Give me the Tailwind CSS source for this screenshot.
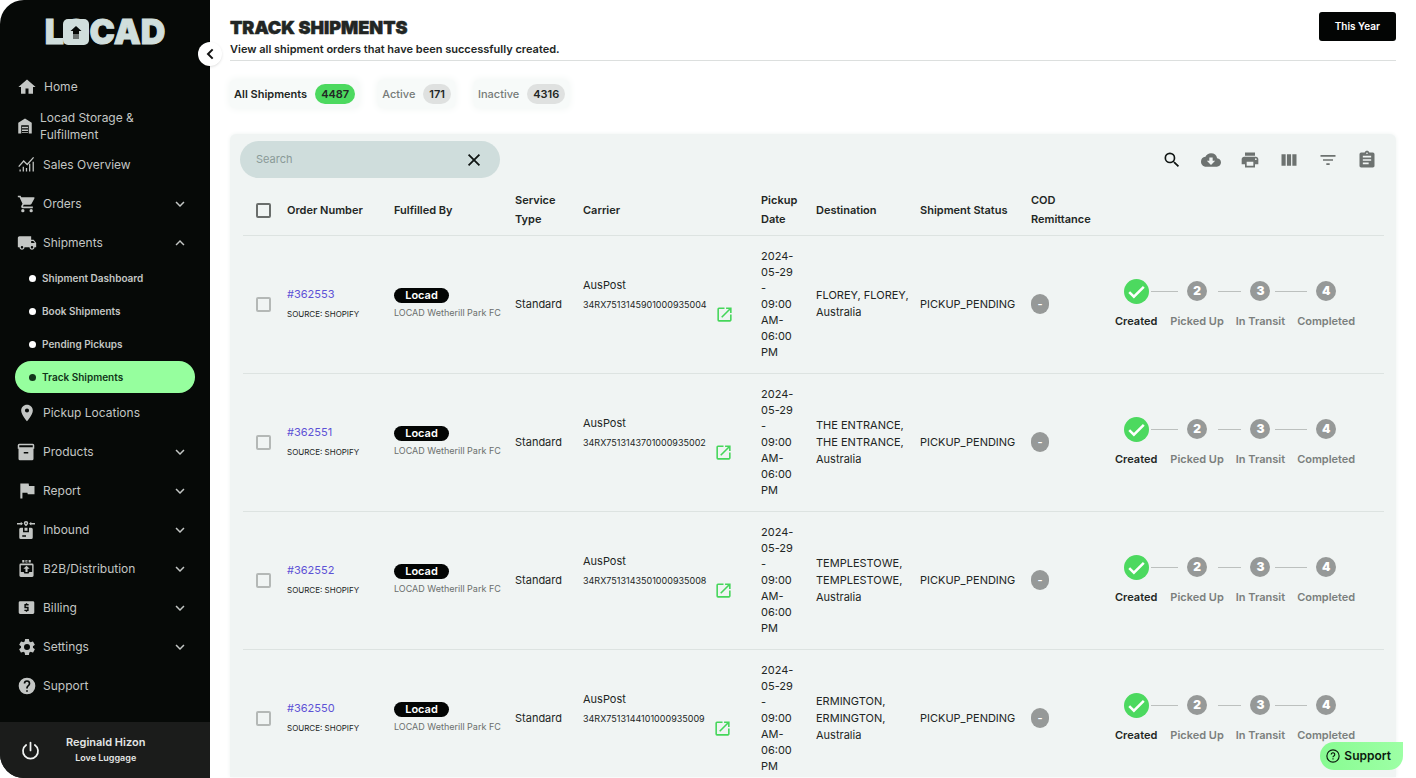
<!DOCTYPE html>
<html lang="en">
<head>
<meta charset="utf-8">
<meta name="viewport" content="width=device-width, initial-scale=1">
<title>Locad - Track Shipments</title>
<script src="https://cdn.jsdelivr.net/npm/@tailwindcss/browser@4"></script>
</head>
<body class="bg-white font-['Inter','Liberation_Sans',sans-serif] text-[#222624]">

<svg class="hidden" aria-hidden="true">
  <symbol id="down" viewBox="0 0 24 24"><path d="M7.41 8.59 12 13.17l4.59-4.58L18 10l-6 6-6-6z"/></symbol>
  <symbol id="up" viewBox="0 0 24 24"><path d="M7.41 15.41 12 10.83l4.59 4.58L18 14l-6-6-6 6z"/></symbol>
  <symbol id="open" viewBox="0 0 24 24"><path d="M19 19H5V5h7V3H5a2 2 0 0 0-2 2v14a2 2 0 0 0 2 2h14c1.100 0 2-.9 2-2v-7h-2zM14 3v2h3.590l-9.830 9.830 1.410 1.410L19 6.410V10h2V3z"/></symbol>
</svg>

<div class="flex h-screen overflow-hidden">

  <!-- Sidebar -->
  <aside class="relative z-10 flex w-[210px] shrink-0 flex-col rounded-l-3xl bg-[#060907] text-[#c3c6c4]">
    <a href="#" aria-label="Locad" class="mt-3 self-center text-[34px] leading-10 font-black text-[#d0dedc] [-webkit-text-stroke:1px_#d0dedc]">L<span class="relative">O<svg class="absolute inset-x-0 top-[8px] mx-auto h-[26px] w-[26px]" viewBox="0 0 26 26" aria-hidden="true"><rect width="26" height="26" rx="5" fill="#d0dedc"/><path d="M13 7l5.500 5H16v3.500h-6V12H7.500zM10 16.500h6v1h-6zM10 18.500h6v1h-6z" fill="#060907"/></svg></span>CAD</a>
    <button type="button" aria-label="Collapse sidebar" class="absolute top-[42px] -right-3 flex size-6 items-center justify-center rounded-full bg-white shadow-sm">
      <svg class="size-4" viewBox="0 0 24 24" fill="none" stroke="#111" stroke-width="3"><path d="m16 5-7 7 7 7"/></svg>
    </button>

    <nav class="mt-[15px] text-[12px]" aria-label="Main">
      <ul>
        <li><a href="#" class="flex h-[39px] items-center gap-2 pl-[18px]">
          <svg class="size-[18px]" viewBox="0 0 24 24" fill="currentColor"><path d="M10 21v-7h4v7h6v-9h3.500L12 2 .5 12H4v9z"/></svg>Home</a></li>
        <li><a href="#" class="flex h-[39px] items-center gap-1.5 pl-4 leading-[17px]">
          <svg class="size-[18px]" viewBox="0 0 24 24" fill="currentColor"><path fill-rule="evenodd" d="M12 2 3 7.500V22h4V11h10v11h4V7.500zM8 13h8v2H8zm0 3.500h8v2H8zM8 20h8v1H8z"/></svg><span>Locad Storage &amp;<br>Fulfillment</span></a></li>
        <li><a href="#" class="flex h-[39px] items-center gap-2 pl-[18px]">
          <svg class="size-[17px]" viewBox="0 0 24 24" fill="none" stroke="currentColor" stroke-width="1.800"><path d="m1 15 7-8 5 5 9-10M3 22v-3M7.500 22v-7M12 22v-5M16.500 22V11M21.500 22V8"/></svg>Sales Overview</a></li>
        <li><button type="button" class="flex h-[39px] w-full items-center gap-1.5 pr-[21px] pl-[17px]">
          <svg class="size-5" viewBox="0 0 24 24" fill="currentColor"><path d="M7 18a2 2 0 1 0 0 4 2 2 0 0 0 0-4M1 2v2h2l3.600 7.590-1.350 2.450C4.520 15.370 5.480 17 7 17h12v-2H7.420c-.14 0-.25-.11-.25-.25l.03-.12.9-1.630h7.450c.75 0 1.410-.41 1.750-1.030l3.580-6.490A1 1 0 0 0 20 4H5.210l-.94-2zm16 16a2 2 0 1 0 0 4 2 2 0 0 0 0-4"/></svg>Orders
          <svg class="ml-auto size-[18px]" fill="currentColor"><use href="#down"/></svg></button></li>
        <li><button type="button" aria-expanded="true" class="flex h-[39px] w-full items-center gap-1.5 pr-[21px] pl-[17px]">
          <svg class="size-5" viewBox="0 0 24 24" fill="currentColor"><path d="M20 8h-3V4H3c-1.100 0-2 .9-2 2v11h2c0 1.660 1.340 3 3 3s3-1.340 3-3h6c0 1.660 1.340 3 3 3s3-1.340 3-3h2v-5zM6 18.500a1.500 1.500 0 1 1 0-3 1.500 1.500 0 0 1 0 3m13.500-9 1.960 2.500H17V9.500zm-1.500 9a1.500 1.500 0 1 1 0-3 1.500 1.500 0 0 1 0 3"/></svg>Shipments
          <svg class="ml-auto size-[18px]" fill="currentColor"><use href="#up"/></svg></button>
          <ul class="mx-[15px] flex flex-col gap-px text-[10px] font-semibold">
            <li><a href="#" class="flex h-8 items-center gap-1.5 pl-[14px]"><i class="size-[7px] rounded-full bg-white"></i>Shipment Dashboard</a></li>
            <li><a href="#" class="flex h-8 items-center gap-1.5 pl-[14px]"><i class="size-[7px] rounded-full bg-white"></i>Book Shipments</a></li>
            <li><a href="#" class="flex h-8 items-center gap-1.5 pl-[14px]"><i class="size-[7px] rounded-full bg-white"></i>Pending Pickups</a></li>
            <li><a href="#" aria-current="page" class="flex h-8 items-center gap-1.5 rounded-full bg-[#96ff9e] pl-[14px] text-[#12351a]"><i class="size-[7px] rounded-full bg-[#12351a]"></i>Track Shipments</a></li>
          </ul></li>
        <li><a href="#" class="flex h-[39px] items-center gap-1.5 pl-[17px]">
          <svg class="size-5" viewBox="0 0 24 24" fill="currentColor"><path d="M12 2C8.130 2 5 5.130 5 9c0 5.250 7 13 7 13s7-7.750 7-13c0-3.870-3.130-7-7-7m0 9.500a2.500 2.500 0 0 1 0-5 2.500 2.500 0 0 1 0 5"/></svg>Pickup Locations</a></li>
        <li><button type="button" class="flex h-[39px] w-full items-center gap-2 pr-[21px] pl-[17px]">
          <svg class="size-[18px]" viewBox="0 0 24 24" fill="currentColor"><path fill-rule="evenodd" d="M3 1h18a2 2 0 0 1 2 2v4.500h-1V21a2 2 0 0 1-2 2H4a2 2 0 0 1-2-2V7.500H1V3a2 2 0 0 1 2-2m0 2v2.500h18V3zm6 9v2h6v-2z"/></svg>Products
          <svg class="ml-auto size-[18px]" fill="currentColor"><use href="#down"/></svg></button></li>
        <li><button type="button" class="flex h-[39px] w-full items-center gap-1.5 pr-[21px] pl-[17px]">
          <svg class="size-5" viewBox="0 0 24 24" fill="currentColor"><path d="M14.400 6 14 3H4v18h2.500v-7h6l.4 2H21V6z"/></svg>Report
          <svg class="ml-auto size-[18px]" fill="currentColor"><use href="#down"/></svg></button></li>
        <li><button type="button" class="flex h-[39px] w-full items-center gap-2 pr-[21px] pl-[17px]">
          <svg class="size-[18px]" viewBox="0 0 24 24" fill="currentColor"><path fill-rule="evenodd" d="M0 2.500h5V1l3 2.500L5 6V4.500H0zM24 2.500h-5V1l-3 2.500L19 6V4.500h5zM12 0a3 3 0 0 1 3 3c0 2-3 4-3 4S9 5 9 3a3 3 0 0 1 3-3m0 2a1 1 0 1 0 0 2 1 1 0 0 0 0-2M5 9h3v6h8V9h3a2 2 0 0 1 2 2v11a2 2 0 0 1-2 2H5a2 2 0 0 1-2-2V11a2 2 0 0 1 2-2M10 9h4v4h-4zM7 19v2h5v-2z"/></svg>Inbound
          <svg class="ml-auto size-[18px]" fill="currentColor"><use href="#down"/></svg></button></li>
        <li><button type="button" class="flex h-[39px] w-full items-center gap-2 pr-[21px] pl-[18px]">
          <svg class="size-[17px]" viewBox="0 0 24 24" fill="currentColor"><path fill-rule="evenodd" d="M6 0h3v3.500H6zM10.500 0h3v1h-2v1h2v1.500h-3zM15 0h3v3.500h-3zM4 5h16a2 2 0 0 1 2 2v15a2 2 0 0 1-2 2H4a2 2 0 0 1-2-2V7a2 2 0 0 1 2-2m0 2.500V17h4l1 2h6l1-2h4V7.500zM12 8l4.500 4.500h-3V17h-3v-4.500h-3z"/></svg>B2B/Distribution
          <svg class="ml-auto size-[18px]" fill="currentColor"><use href="#down"/></svg></button></li>
        <li><button type="button" class="flex h-[39px] w-full items-center gap-2 pr-[21px] pl-[18px]">
          <svg class="size-[17px]" viewBox="0 0 24 24" fill="currentColor"><path fill-rule="evenodd" d="M3 3h18a2 2 0 0 1 2 2v14a2 2 0 0 1-2 2H3a2 2 0 0 1-2-2V5a2 2 0 0 1 2-2m8 3v1H9v6h4v2H9v2h2v1h2v-1h2v-6h-4V9h4V7h-2V6z"/></svg>Billing
          <svg class="ml-auto size-[18px]" fill="currentColor"><use href="#down"/></svg></button></li>
        <li><button type="button" class="flex h-[39px] w-full items-center gap-1.5 pr-[21px] pl-[17px]">
          <svg class="size-5" viewBox="0 0 24 24" fill="currentColor"><path d="M19.140 12.940c.04-.3.060-.61.060-.94 0-.32-.02-.64-.07-.94l2.030-1.580a.49.49 0 0 0 .12-.61l-1.920-3.320a.49.49 0 0 0-.59-.22l-2.390.96a7 7 0 0 0-1.620-.94l-.36-2.540a.48.480 0 0 0-.48-.41h-3.840a.47.470 0 0 0-.47.410l-.36 2.540c-.59.240-1.130.570-1.620.940l-2.390-.96a.48.480 0 0 0-.59.220L2.740 8.870a.47.470 0 0 0 .12.610l2.030 1.580c-.05.300-.09.630-.09.940s.02.640.07.940l-2.030 1.580a.49.490 0 0 0-.12.610l1.920 3.320c.12.220.37.290.59.220l2.390-.96c.5.380 1.030.700 1.620.940l.36 2.540c.05.240.24.410.48.410h3.840c.24 0 .44-.17.470-.41l.36-2.540c.59-.24 1.130-.56 1.620-.94l2.390.96c.22.080.47 0 .59-.22l1.920-3.320a.47.470 0 0 0-.12-.61zM12 15.600A3.600 3.600 0 1 1 12 8.400a3.600 3.600 0 0 1 0 7.200"/></svg>Settings
          <svg class="ml-auto size-[18px]" fill="currentColor"><use href="#down"/></svg></button></li>
        <li><a href="#" class="flex h-[39px] items-center gap-1.5 pl-[17px]">
          <svg class="size-5" viewBox="0 0 24 24" fill="currentColor"><path d="M12 2a10 10 0 1 0 0 20 10 10 0 0 0 0-20m1 17h-2v-2h2zm2.070-7.750-.9.920C13.450 12.900 13 13.500 13 15h-2v-.5c0-1.100.45-2.100 1.170-2.830l1.240-1.260c.37-.36.590-.86.590-1.410a2 2 0 1 0-4 0H8a4 4 0 1 1 8 0c0 .88-.36 1.680-.93 2.250"/></svg>Support</a></li>
      </ul>
    </nav>

    <div class="mt-auto flex h-14 items-center rounded-bl-3xl bg-[#1b1c1b] pl-[21px]">
      <button type="button" aria-label="Log out"><svg class="size-[19px]" viewBox="0 0 24 24" fill="none" stroke="#f2f4f3" stroke-width="2.200" stroke-linecap="round"><path d="M12 2v10M6.500 5a9.500 9.500 0 1 0 11 0"/></svg></button>
      <div class="ml-[26px] text-center font-semibold text-[#e3e5e4]">
        <p class="text-[11px] leading-4">Reginald Hizon</p>
        <p class="text-[9px] leading-4">Love Luggage</p>
      </div>
    </div>
  </aside>

  <!-- Page -->
  <main class="flex min-w-0 flex-1 flex-col px-5 pt-3">
    <header class="flex h-[49px] shrink-0 items-start justify-between border-b border-[#dcdfde]">
      <div>
        <h1 class="mt-[5px] text-[18px] leading-[22px] font-black [-webkit-text-stroke:0.5px_#222624]">TRACK SHIPMENTS</h1>
        <p class="text-[11px] leading-5 font-semibold">View all shipment orders that have been successfully created.</p>
      </div>
      <button type="button" class="h-[29px] rounded-[3px] bg-[#030504] px-4 text-[10px] font-semibold text-white">This Year</button>
    </header>

    <div class="mt-[19px] flex shrink-0 gap-[19px] text-[11px] font-semibold">
      <button type="button" class="flex h-7 items-center gap-2 rounded bg-[#f7faf9] px-1 shadow-[0_0_8px_#eef3f1]">All Shipments <span class="rounded-full bg-[#4cd95f] px-1.5 leading-5">4487</span></button>
      <button type="button" class="flex h-7 items-center gap-2 rounded bg-[#f7faf9] px-1 shadow-[0_0_8px_#eef3f1]"><span class="font-medium text-[#767a78]">Active</span> <span class="rounded-full bg-[#dfe1e0] px-1.5 leading-5">171</span></button>
      <button type="button" class="flex h-7 items-center gap-2 rounded bg-[#f7faf9] px-1 shadow-[0_0_8px_#eef3f1]"><span class="font-medium text-[#767a78]">Inactive</span> <span class="rounded-full bg-[#dfe1e0] px-1.5 leading-5">4316</span></button>
    </div>

    <section class="mt-[26px] mb-px min-h-0 flex-1 overflow-hidden rounded-t-md bg-[#f0f4f3] pt-[7px] shadow-[0_0_4px_#eef3f1]">
      <div class="flex items-center justify-between pr-[19px] pl-2.5">
        <div class="flex h-[37px] w-[260px] items-center rounded-full bg-[#cfdddc] px-4">
          <input type="search" aria-label="Search" placeholder="Search" class="min-w-0 flex-1 text-[11px] outline-none placeholder:text-[#8a9a98]">
          <button type="button" aria-label="Clear search"><svg class="size-5" viewBox="0 0 24 24" fill="none" stroke="#111614" stroke-width="2.200"><path d="m5.500 5.500 13 13m0-13-13 13"/></svg></button>
        </div>
        <div class="flex items-center gap-[19px] text-[#6d7270]">
          <button type="button" aria-label="Search"><svg class="size-5" viewBox="0 0 24 24" fill="#111614"><path d="M15.500 14h-.79l-.28-.27A6.470 6.470 0 0 0 16 9.500 6.500 6.500 0 1 0 9.500 16c1.610 0 3.090-.59 4.230-1.570l.27.280v.79l5 4.990L20.490 19zm-6 0a4.500 4.500 0 1 1 0-9 4.500 4.500 0 0 1 0 9"/></svg></button>
          <button type="button" aria-label="Download"><svg class="size-5" viewBox="0 0 24 24" fill="currentColor"><path d="M19.350 10.040A7.490 7.490 0 0 0 12 4C9.110 4 6.600 5.640 5.350 8.040A5.990 5.990 0 0 0 0 14c0 3.310 2.690 6 6 6h13c2.760 0 5-2.240 5-5 0-2.640-2.050-4.780-4.650-4.960M17 13l-5 5-5-5h3V9h4v4z"/></svg></button>
          <button type="button" aria-label="Print"><svg class="size-5" viewBox="0 0 24 24" fill="currentColor"><path d="M19 8H5c-1.660 0-3 1.340-3 3v6h4v4h12v-4h4v-6c0-1.660-1.340-3-3-3m-3 11H8v-5h8zm3-7a1 1 0 1 1 0-2 1 1 0 0 1 0 2m-1-9H6v4h12z"/></svg></button>
          <button type="button" aria-label="View columns"><svg class="size-5" viewBox="0 0 24 24" fill="currentColor"><path d="M3 5h5v14H3zM9.500 5h5v14h-5zM16 5h5v14h-5z"/></svg></button>
          <button type="button" aria-label="Filter"><svg class="size-5" viewBox="0 0 24 24" fill="currentColor"><path d="M10 18h4v-2h-4zM3 6v2h18V6zm3 7h12v-2H6z"/></svg></button>
          <button type="button" aria-label="Report"><svg class="size-5" viewBox="0 0 24 24" fill="currentColor"><path d="M19 3h-4.180C14.400 1.840 13.300 1 12 1s-2.400.84-2.820 2H5a2 2 0 0 0-2 2v14c0 1.100.9 2 2 2h14c1.100 0 2-.9 2-2V5a2 2 0 0 0-2-2m-7 0a1 1 0 1 1 0 2 1 1 0 0 1 0-2m2 14H7v-2h7zm3-4H7v-2h10zm0-4H7V7h10z"/></svg></button>
        </div>
      </div>

      <div class="mt-2 mr-3 ml-[13px]">
        <table class="w-full table-fixed border-collapse text-[11px]">
          <colgroup>
            <col class="w-9"><col class="w-[107px]"><col class="w-[121px]"><col class="w-[68px]"><col class="w-[178px]"><col class="w-[55px]"><col class="w-[104px]"><col class="w-[111px]"><col class="w-[84px]"><col>
          </colgroup>
          <thead>
            <tr class="h-[49px] border-b border-[#dde3e1] text-left leading-[19px] *:p-0 *:pl-2 *:font-semibold">
              <th><input type="checkbox" aria-label="Select all" class="ml-[5px] block size-[15px] appearance-none rounded-xs border-2 border-[#6a6e6c]"></th>
              <th>Order Number</th><th>Fulfilled By</th><th>Service<br>Type</th><th>Carrier</th><th>Pickup<br>Date</th><th>Destination</th><th class="whitespace-nowrap">Shipment Status</th><th>COD<br>Remittance</th><th aria-label="Progress"></th>
            </tr>
          </thead>
          <tbody id="rows"></tbody>
        </table>
      </div>
    </section>
  </main>
</div>

<button type="button" class="fixed right-[13px] bottom-2 z-20 flex h-7 items-center gap-1 rounded-full rounded-tr-md bg-linear-to-r from-[#88fb92] to-[#9dffa5] pr-3 pl-1.5 text-[12px] font-semibold text-[#0b1a0e]">
  <svg class="size-3.5" viewBox="0 0 24 24" fill="none" stroke="currentColor" stroke-width="2"><circle cx="12" cy="12" r="10.500"/><path d="M9 9.500a3 3 0 1 1 4.500 2.600c-1 .6-1.500 1-1.500 2.200M12 16v2"/></svg>Support
</button>

<script>
  const shipments = [
    ['362553', '34RX7513145901000935004', 'FLOREY, FLOREY,<br>Australia'],
    ['362551', '34RX7513143701000935002', 'THE ENTRANCE,<br>THE ENTRANCE,<br>Australia'],
    ['362552', '34RX7513143501000935008', 'TEMPLESTOWE,<br>TEMPLESTOWE,<br>Australia'],
    ['362550', '34RX7513144101000935009', 'ERMINGTON,<br>ERMINGTON,<br>Australia'],
  ];
  const step = (n, label) => `
    <li class="relative px-1.5 text-center text-[#7b7f7d]">
      <span class="absolute top-[14px] right-[calc(50%+19px)] left-[calc(-50%+19px)] border-t border-[#bcc0be]"></span>
      <span class="flex h-7 items-center justify-center"><span class="size-5 rounded-full bg-[#969998] text-[12px] leading-5 font-black text-white">${n}</span></span>
      <span class="mt-1.5 block leading-5">${label}</span>
    </li>`;
  document.getElementById('rows').innerHTML = shipments.map(([id, tracking, place]) => `
    <tr class="h-[138px] border-b border-[#dde3e1] *:p-0 *:pl-2">
      <td><input type="checkbox" aria-label="Select order ${id}" class="ml-[5px] block size-[15px] appearance-none rounded-xs border-2 border-[#b4b8b6]"></td>
      <td class="leading-5"><a href="#" class="block text-[11px] text-[#5d52d6]">#${id}</a><span class="block text-[8px]">SOURCE: SHOPIFY</span></td>
      <td><span class="block w-[55px] rounded-full bg-[#030504] text-center leading-[15px] font-semibold text-white">Locad</span><span class="block pt-0.5 text-[9px] leading-4 whitespace-nowrap text-[#6b6f6d]">LOCAD Wetherill Park FC</span></td>
      <td>Standard</td>
      <td class="leading-5"><span class="block">AusPost</span><span class="flex items-start text-[9px]">${tracking}<button type="button" aria-label="Open tracking" class="py-2.5 pl-2"><svg class="size-[19px]" fill="#45d65a"><use href="#open"/></svg></button></span></td>
      <td class="leading-4">2024-<br>05-29<br>-<br>09:00<br>AM-<br>06:00<br>PM</td>
      <td class="leading-[17px] whitespace-nowrap">${place}</td>
      <td>PICKUP_PENDING</td>
      <td><span class="block h-5 w-[18px] rounded-full bg-[#969998] text-center leading-5 font-semibold text-white">-</span></td>
      <td><ol class="flex font-semibold whitespace-nowrap">
        <li class="relative z-10 pr-[7px] text-center">
          <span class="flex h-7 items-center justify-center"><svg class="size-[25px]" viewBox="0 0 24 24"><circle cx="12" cy="12" r="12" fill="#4cd95f"/><path d="m5 12.500 4.500 4.500L19 7.500" fill="none" stroke="#fff" stroke-width="2.400"/></svg></span>
          <span class="mt-1.5 block leading-5">Created</span>
        </li>
        ${step(2, 'Picked Up')}${step(3, 'In Transit')}${step(4, 'Completed')}
      </ol></td>
    </tr>`).join('');
</script>
</body>
</html>
